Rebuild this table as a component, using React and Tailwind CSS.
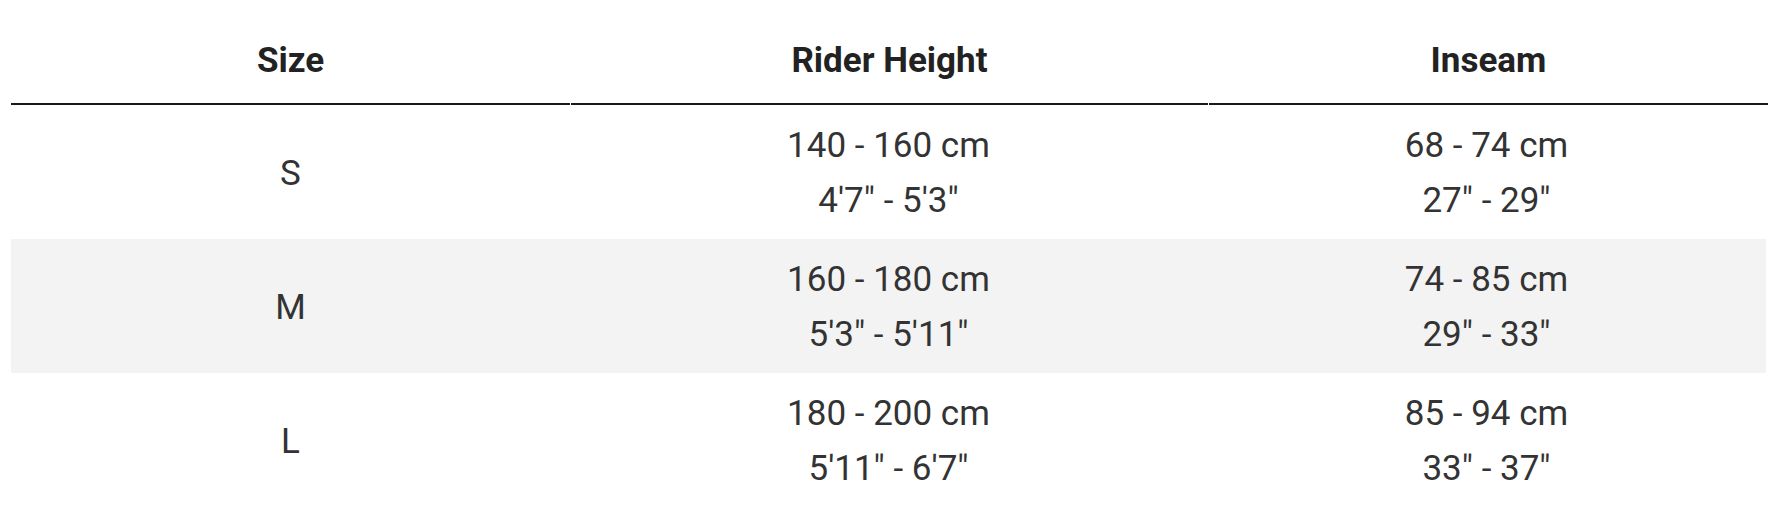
const rows = [
  { size: "S", height: ["140 - 160 cm", "4'7\" - 5'3\""], inseam: ["68 - 74 cm", "27\" - 29\""] },
  { size: "M", height: ["160 - 180 cm", "5'3\" - 5'11\""], inseam: ["74 - 85 cm", "29\" - 33\""] },
  { size: "L", height: ["180 - 200 cm", "5'11\" - 6'7\""], inseam: ["85 - 94 cm", "33\" - 37\""] },
];

function Cell({ lines }) {
  return (
    <div className="flex flex-col items-center justify-center">
      {lines.map((l) => (
        <span key={l}>{l}</span>
      ))}
    </div>
  );
}

export default function App() {
  return (
    <div className="w-[1782px] h-[525px] bg-white pl-[11px] pr-[16px] font-['Roboto',sans-serif] text-[35px] leading-[55px] text-[#333]">
      <div className="grid grid-cols-[559px_637px_559px] gap-x-px font-bold text-[#222]">
        {["Size", "Rider Height", "Inseam"].map((h) => (
          <div key={h} className="pt-[33px] pb-[15px] text-center border-b-2 border-[#1a1a1a]">
            {h}
          </div>
        ))}
      </div>
      {rows.map((r, i) => (
        <div
          key={r.size}
          className={
            "grid grid-cols-[559px_637px_559px] h-[134px] pt-[13px] pb-[11px] text-center " +
            (i === 1 ? "bg-[#f3f3f3]" : "bg-white")
          }
        >
          <div className="flex items-center justify-center">{r.size}</div>
          <Cell lines={r.height} />
          <Cell lines={r.inseam} />
        </div>
      ))}
    </div>
  );
}
